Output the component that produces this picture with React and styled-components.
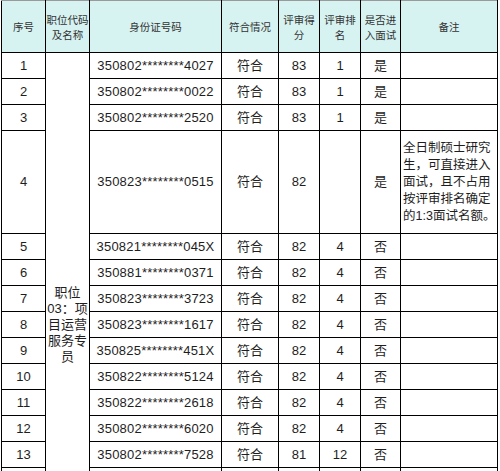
import React from "react";
import styled, { createGlobalStyle } from "styled-components";

const Global = createGlobalStyle`
  html, body { margin: 0; padding: 0; background: #fff; }
  body { overflow: hidden; font-family: "Liberation Sans", "Noto Sans CJK SC", sans-serif; }
`;

const Wrap = styled.div`
  padding-left: 1px;
`;

const Table = styled.table`
  border-collapse: collapse;
  table-layout: fixed;
  width: 497px;
  color: #1e1e1e;
`;

const HeadRow = styled.tr`
  height: 52px;
  background: #d6f2f1;
`;

const Row = styled.tr`
  height: ${(p) => p.$h || 26}px;
`;

const HeadCell = styled.th`
  border: 1px solid #000;
  border-top-color: #9a9a9a;
  padding: 0;
  font-family: "Noto Sans CJK SC", sans-serif;
  font-weight: normal;
  font-size: 10.5px;
  line-height: 15px;
  color: #333;
  text-align: center;
  vertical-align: middle;
  white-space: nowrap;
`;

const Cell = styled.td`
  border: 1px solid #000;
  padding: 0 ${(p) => (p.$left ? 2 : 1)}px;
  font-family: "Liberation Sans", "Noto Sans CJK SC", sans-serif;
  font-size: ${(p) => (p.$small ? 12.5 : 13)}px;
  line-height: ${(p) => (p.$lh ? p.$lh : 16)}px;
  text-align: ${(p) => (p.$left ? "left" : "center")};
  vertical-align: middle;
  white-space: nowrap;
  overflow: hidden;
`;

const Id = styled.span`
  letter-spacing: 0.2px;
`;

const remark = ["全日制硕士研究", "生，可直接进入", "面试，且不占用", "按评审排名确定", "的1:3面试名额。"];

const rows = [
  ["1", "350802********4027", "83", "1", "是"],
  ["2", "350802********0022", "83", "1", "是"],
  ["3", "350802********2520", "83", "1", "是"],
  ["4", "350823********0515", "82", "", "是", remark],
  ["5", "350821********045X", "82", "4", "否"],
  ["6", "350881********0371", "82", "4", "否"],
  ["7", "350823********3723", "82", "4", "否"],
  ["8", "350823********1617", "82", "4", "否"],
  ["9", "350825********451X", "82", "4", "否"],
  ["10", "350822********5124", "82", "4", "否"],
  ["11", "350822********2618", "82", "4", "否"],
  ["12", "350802********6020", "82", "4", "否"],
  ["13", "350802********7528", "81", "12", "否"],
  ["14", "350802********3016", "81", "12", "否"],
  ["15", "350821********1829", "80", "14", "否"],
  ["16", "350802********5043", "80", "14", "否"],
  ["17", "350825********2216", "79", "16", "否"],
  ["18", "350823********0427", "79", "16", "否"],
];

export default function App() {
  return (
    <Wrap>
      <Global />
      <Table>
        <colgroup>
          <col style={{ width: 44 }} />
          <col style={{ width: 44 }} />
          <col style={{ width: 132 }} />
          <col style={{ width: 57 }} />
          <col style={{ width: 41 }} />
          <col style={{ width: 41 }} />
          <col style={{ width: 40 }} />
          <col style={{ width: 97 }} />
        </colgroup>
        <thead>
          <HeadRow>
            <HeadCell>序号</HeadCell>
            <HeadCell>职位代码<br />及名称</HeadCell>
            <HeadCell>身份证号码</HeadCell>
            <HeadCell>符合情况</HeadCell>
            <HeadCell>评审得<br />分</HeadCell>
            <HeadCell>评审排<br />名</HeadCell>
            <HeadCell>是否进<br />入面试</HeadCell>
            <HeadCell>备注</HeadCell>
          </HeadRow>
        </thead>
        <tbody>
          {rows.map((r, i) => (
            <Row key={r[0]} $h={r[5] ? 103 : 26}>
              <Cell>{r[0]}</Cell>
              {i === 0 && (
                <Cell rowSpan={rows.length}>
                  职位<br />03：项<br />目运营<br />服务专<br />员
                </Cell>
              )}
              <Cell><Id>{r[1]}</Id></Cell>
              <Cell>符合</Cell>
              <Cell>{r[2]}</Cell>
              <Cell>{r[3]}</Cell>
              <Cell>{r[4]}</Cell>
              <Cell $left $small $lh={17}>
                {r[5]
                  ? r[5].map((line, k) => (
                      <React.Fragment key={k}>
                        {line}
                        {k < r[5].length - 1 && <br />}
                      </React.Fragment>
                    ))
                  : ""}
              </Cell>
            </Row>
          ))}
        </tbody>
      </Table>
    </Wrap>
  );
}
